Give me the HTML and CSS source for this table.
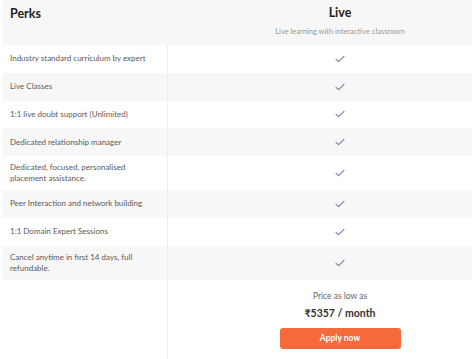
FILE: index.html
```html
<!DOCTYPE html>
<html lang="en">
<head>
<meta charset="utf-8">
<title>Perks</title>
<link rel="stylesheet" href="styles.css">
</head>
<body>
<div class="plan-table">
  <div class="row head">
    <div class="cell perk"><span class="perks-title">Perks</span></div>
    <div class="cell value">
      <span class="plan-name">Live</span>
      <span class="plan-sub">Live learning with interactive classroom</span>
    </div>
  </div>

  <div class="row">
    <div class="cell perk">Industry standard curriculum by expert</div>
    <div class="cell value"><svg class="tick" viewBox="0 0 10 8"><path d="M1 4.3 3.6 6.7 9 1.3"/></svg></div>
  </div>
  <div class="row alt">
    <div class="cell perk">Live Classes</div>
    <div class="cell value"><svg class="tick" viewBox="0 0 10 8"><path d="M1 4.3 3.6 6.7 9 1.3"/></svg></div>
  </div>
  <div class="row">
    <div class="cell perk">1:1 live doubt support (Unlimited)</div>
    <div class="cell value"><svg class="tick" viewBox="0 0 10 8"><path d="M1 4.3 3.6 6.7 9 1.3"/></svg></div>
  </div>
  <div class="row alt">
    <div class="cell perk">Dedicated relationship manager</div>
    <div class="cell value"><svg class="tick" viewBox="0 0 10 8"><path d="M1 4.3 3.6 6.7 9 1.3"/></svg></div>
  </div>
  <div class="row">
    <div class="cell perk">Dedicated, focused, personalised<br>placement assistance.</div>
    <div class="cell value"><svg class="tick" viewBox="0 0 10 8"><path d="M1 4.3 3.6 6.7 9 1.3"/></svg></div>
  </div>
  <div class="row alt">
    <div class="cell perk">Peer Interaction and network building</div>
    <div class="cell value"><svg class="tick" viewBox="0 0 10 8"><path d="M1 4.3 3.6 6.7 9 1.3"/></svg></div>
  </div>
  <div class="row">
    <div class="cell perk">1:1 Domain Expert Sessions</div>
    <div class="cell value"><svg class="tick" viewBox="0 0 10 8"><path d="M1 4.3 3.6 6.7 9 1.3"/></svg></div>
  </div>
  <div class="row alt">
    <div class="cell perk">Cancel anytime in first 14 days, full<br>refundable.</div>
    <div class="cell value"><svg class="tick" viewBox="0 0 10 8"><path d="M1 4.3 3.6 6.7 9 1.3"/></svg></div>
  </div>

  <div class="row foot">
    <div class="cell perk"></div>
    <div class="cell value price">
      <span class="price-label">Price as low as</span>
      <span class="price-amount">₹5357 / month</span>
      <button class="apply">Apply now</button>
    </div>
  </div>
</div>
</body>
</html>
```

FILE: styles.css
```css
* { box-sizing: border-box; }

html, body {
  margin: 0;
  padding: 0;
  background: #fff;
}

body {
  font-family: "Lato", "Open Sans", sans-serif;
  color: #555;
  width: 474px;
  height: 359px;
  overflow: hidden;
}

.plan-table {
  margin: 0 2px;
  width: 470px;
  display: flex;
  flex-direction: column;
}

.row {
  display: grid;
  grid-template-columns: 166px 1fr;
  min-height: 27.75px;
}

.row.alt,
.row.head {
  background: #f7f7f7;
}

.cell {
  display: flex;
  align-items: center;
}

.perk {
  padding: 6px 8px;
  font-size: 8px;
  line-height: 11px;
  color: #5a5a5a;
  border-right: 1px solid #eeeeee;
}

.value {
  justify-content: center;
  padding-left: 40px;
}

/* header */
.row.head {
  height: 45px;
}

.row.head .perk {
  align-items: flex-start;
  padding-top: 6px;
  border-right: none;
}

.perks-title {
  font-size: 12.5px;
  font-weight: 700;
  color: #222;
  line-height: 16px;
}

.row.head .value {
  flex-direction: column;
  justify-content: flex-start;
  padding-top: 5px;
}

.plan-name {
  font-size: 12.5px;
  font-weight: 700;
  color: #222;
  line-height: 16px;
}

.plan-sub {
  margin-top: 6px;
  font-size: 7.5px;
  line-height: 10px;
  color: #999;
}

.tick {
  width: 10px;
  height: 8px;
  fill: none;
  stroke: #7b7ca8;
  stroke-width: 1.1;
  stroke-linecap: round;
  stroke-linejoin: round;
}

/* price footer */
.row.foot {
  height: 80px;
}

.price {
  flex-direction: column;
  justify-content: flex-start;
  padding-top: 10px;
}

.price-label {
  font-size: 8.5px;
  color: #666;
  line-height: 12px;
}

.price-amount {
  margin-top: 4px;
  font-size: 10.5px;
  font-weight: 700;
  color: #333;
  line-height: 14px;
}

.apply {
  margin-top: 8px;
  width: 121px;
  height: 21px;
  border: none;
  border-radius: 3px;
  background: #f46a3b;
  color: #fff;
  font-family: inherit;
  font-size: 8.5px;
  font-weight: 700;
  padding: 0;
}
```
